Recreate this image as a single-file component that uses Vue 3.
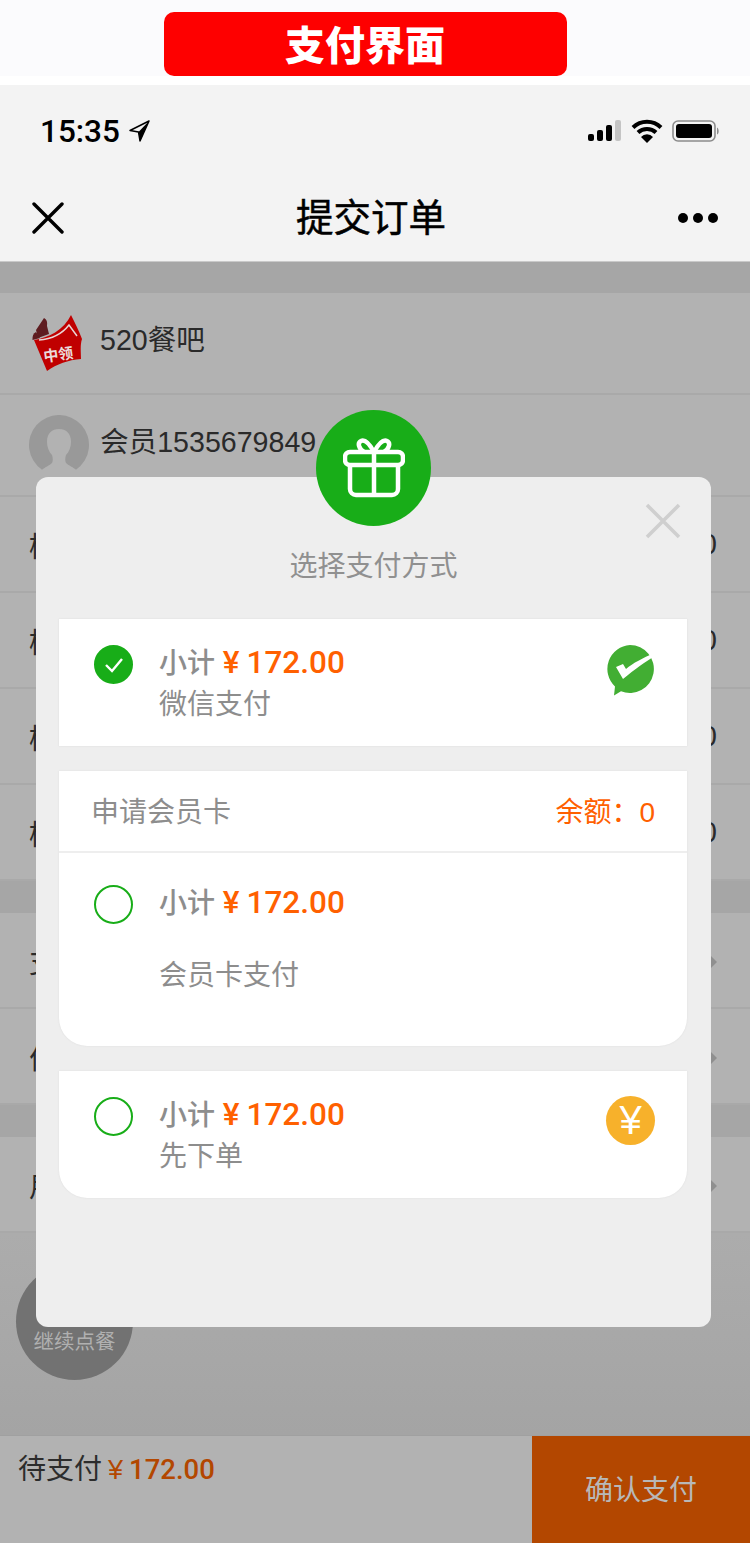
<script setup>
const items = [0, 1, 2, 3]
const links = [
  { label: '支付方式' },
  { label: '优惠券' }
]
</script>

<template>
  <div class="page">
    <div class="banner">
      <div class="banner-tag">支付界面</div>
    </div>

    <div class="phone">
      <div class="statusbar">
        <div class="clock">
          <span>15:35</span>
          <svg width="24" height="24" viewBox="0 0 24 24">
            <path d="M22 2 3 11.500l8.500 1.500 1.500 9z" fill="none" stroke="#000" stroke-width="1.500" stroke-linejoin="round" />
            <path d="M22 2 11.500 13l1.500 9z" fill="#000" />
          </svg>
        </div>
        <div class="status-icons">
          <svg width="35" height="24" viewBox="0 0 35 24">
            <rect x="1" y="15" width="6" height="7" rx="2" fill="#000" />
            <rect x="10" y="11" width="6" height="11" rx="2" fill="#000" />
            <rect x="19" y="6" width="6" height="16" rx="2" fill="#000" />
            <rect x="28" y="1" width="6" height="21" rx="2" fill="#c4c4c4" />
          </svg>
          <svg width="32" height="24" viewBox="0 0 32 24">
            <path d="M2 8.500a20 20 0 0 1 28 0M7 13.500a13 13 0 0 1 18 0" fill="none" stroke="#000" stroke-width="4" />
            <path d="M16 24l-6-6a8 8 0 0 1 12 0z" fill="#000" />
          </svg>
          <svg width="48" height="24" viewBox="0 0 48 24">
            <rect x="1" y="2" width="42" height="20" rx="5" fill="none" stroke="#8c8c8c" stroke-width="1.600" />
            <rect x="4" y="5" width="36" height="14" rx="3" fill="#000" />
            <path d="M45 8.500c2 .5 2.500 6.500 0 7z" fill="#8c8c8c" />
          </svg>
        </div>
      </div>
      <div class="navbar">
        <svg class="nav-close" width="32" height="32" viewBox="0 0 32 32">
          <path d="M2 2 30 30M30 2 2 30" stroke="#000" stroke-width="3.400" stroke-linecap="round" />
        </svg>
        <div class="nav-title">提交订单</div>
        <div class="nav-more"><i></i><i></i><i></i></div>
      </div>
    </div>

    <div class="order">
      <div class="group first">
        <div class="row head">
          <svg width="52" height="58" viewBox="0 0 52 58" class="logo">
            <path d="M4 16 12 4q4 2 3 8l2 8-11 4z" fill="#5e1c20" />
            <path d="M.5 26Q0 20 4 18l4 6z" fill="#5e1c20" />
            <path d="M2 26C16 24 32 16 39 1c4 8 8 16 11 24-2 6-1 13-1 20-13 1-24 5-34 12z" fill="#c00000" />
            <path d="M7 26C20 25 30 20 37 11l8 11" fill="none" stroke="#e9d5d5" stroke-width="1.500" />
            <text x="27" y="46" text-anchor="middle" class="logo-text" transform="rotate(-8 27 46)">中领</text>
          </svg>
          <span class="row-text">520餐吧</span>
        </div>
        <div class="row head">
          <svg width="60" height="60" viewBox="0 0 60 60" class="avatar">
            <path d="M13 54.700A30 30 0 1 1 47 54.700C45 53 39 50 37 48 36 46 36 43 37 40 40 37 42 32 42 27 42 18 37 14 30 14 23 14 18 18 18 27 18 32 20 37 23 40 24 43 24 46 23 48 21 50 15 53 13 54.700z" fill="#999" />
          </svg>
          <span class="row-text">会员1535679849</span>
        </div>
        <div v-for="i in items" :key="i" class="row item">
          <span class="row-text">桃</span>
          <span class="row-text">0</span>
        </div>
      </div>

      <div class="group">
        <div v-for="link in links" :key="link.label" class="row item">
          <span class="row-text">{{ link.label }}</span>
          <span class="arrow"></span>
        </div>
      </div>

      <div class="group">
        <div class="row item">
          <span class="row-text">用户备注</span>
          <span class="arrow"></span>
        </div>
      </div>

      <div class="filler">
        <div class="continue">继续点餐</div>
      </div>

      <div class="footer">
        <div class="footer-total">
          <span>待支付</span>
          <span class="footer-price"><small>¥</small>172.00</span>
        </div>
        <div class="footer-btn">确认支付</div>
      </div>
    </div>

    <div class="modal">
      <div class="gift">
        <svg width="62" height="60" viewBox="0 0 62 60">
          <path d="M31 14C26 5 22 1 18 3c-4 2-2 8 3 11M31 14c5-9 9-13 13-11 4 2 2 8-3 11" fill="none" stroke="#fff" stroke-width="4.500" />
          <rect x="2" y="14" width="58" height="13" rx="5" fill="none" stroke="#fff" stroke-width="4.500" />
          <path d="M7 27v24a6 6 0 0 0 6 6h36a6 6 0 0 0 6-6V27M31 14v43" fill="none" stroke="#fff" stroke-width="4.500" />
        </svg>
      </div>
      <svg class="modal-close" width="36" height="36" viewBox="0 0 36 36">
        <path d="M2 2 34 34M34 2 2 34" stroke="#cfcfcf" stroke-width="3.500" />
      </svg>
      <div class="modal-title">选择支付方式</div>

      <div class="pay-card square">
        <div class="pay-row">
          <span class="radio checked">
            <svg width="22" height="18" viewBox="0 0 22 18">
              <path d="M3 9l6 6L19 3" fill="none" stroke="#fff" stroke-width="2.400" />
            </svg>
          </span>
          <div class="pay-text">
            <div class="pay-sum">小计 <b><i>¥</i>172.00</b></div>
            <div class="pay-name">微信支付</div>
          </div>
          <svg class="pay-icon" width="50" height="52" viewBox="0 0 50 52">
            <path d="M25 1a24 24 0 1 1-9 46.300L9 51.500l1-9A24 24 0 0 1 25 1z" fill="#42ae33" />
            <path d="M11 23l7-3 3 5C28 19 38 14 49 9L50 12C40 18 30 25 18 35z" fill="#fff" />
          </svg>
        </div>
      </div>

      <div class="pay-card">
        <div class="card-head">
          <span>申请会员卡</span>
          <span class="balance">余额：0</span>
        </div>
        <div class="pay-row member">
          <span class="radio"></span>
          <div class="pay-text">
            <div class="pay-sum">小计 <b><i>¥</i>172.00</b></div>
            <div class="pay-name spaced">会员卡支付</div>
          </div>
        </div>
      </div>

      <div class="pay-card">
        <div class="pay-row">
          <span class="radio"></span>
          <div class="pay-text">
            <div class="pay-sum">小计 <b><i>¥</i>172.00</b></div>
            <div class="pay-name">先下单</div>
          </div>
          <span class="yen">¥</span>
        </div>
      </div>
    </div>
  </div>
</template>

<style>
body {
  background: #fff;
}
</style>

<style scoped>
.page {
  position: relative;
  width: 750px;
  height: 1545px;
  overflow: hidden;
  background: #fff;
  font-family: "Liberation Sans", "Noto Sans CJK SC", sans-serif;
}

.banner {
  height: 76px;
  background: #fbfbfd;
  display: flex;
  justify-content: center;
  align-items: flex-end;
  margin-bottom: 9px;
}
.banner-tag {
  width: 403px;
  height: 64px;
  margin-left: -20px;
  background: #fe0000;
  border-radius: 10px;
  color: #fff;
  font-size: 40px;
  font-weight: 900;
  line-height: 68px;
  text-align: center;
}

.phone {
  height: 176px;
  background: #f3f3f3;
}
.statusbar {
  height: 92px;
  padding: 0 30px 0 40px;
  display: flex;
  justify-content: space-between;
  align-items: center;
  box-sizing: border-box;
}
.clock {
  display: flex;
  align-items: center;
  gap: 7px;
  font-family: Roboto, sans-serif;
  font-size: 31.500px;
  font-weight: 500;
  color: #000;
}
.status-icons {
  display: flex;
  align-items: center;
  gap: 9px;
}
.navbar {
  height: 84px;
  display: flex;
  align-items: center;
  justify-content: space-between;
  padding: 0 32px 2px;
  box-sizing: border-box;
}
.nav-title {
  flex: 1;
  text-align: center;
  font-size: 37.500px;
  font-weight: 400;
  color: #000;
  -webkit-text-stroke: 0.5px #000;
  margin-top: -8px;
}
.nav-more {
  display: flex;
  gap: 5px;
}
.nav-more i {
  width: 10px;
  height: 10px;
  border-radius: 50%;
  background: #000;
}

.order {
  height: 1282px;
  background: #a6a6a6;
  display: flex;
  flex-direction: column;
  border-top: 1px solid #c9c9c9;
  box-sizing: border-box;
}
.group {
  margin-top: 32px;
  background: #b2b2b2;
}
.group.first {
  margin-top: 31px;
}
.row {
  display: flex;
  align-items: center;
  border-bottom: 2px solid #a9a9a9;
  box-sizing: border-box;
  color: #2a2a2a;
}
.row.head {
  height: 102px;
  gap: 11px;
  padding: 0 30px;
}
.row.head .row-text {
  margin-top: -12px;
}
.row.item {
  height: 96px;
  justify-content: space-between;
  padding: 0 33px 0 29px;
}
.row.head .logo {
  margin-left: 2px;
  margin-right: 5px;
}
.row.head .avatar {
  margin-left: -1px;
}
.logo-text {
  fill: #eadada;
  font-size: 15px;
  font-weight: 700;
}
.row-text {
  font-size: 28.600px;
}
.arrow {
  width: 0;
  height: 0;
  margin-top: 4px;
  border-left: 7px solid #8f8f8f;
  border-top: 7px solid transparent;
  border-bottom: 7px solid transparent;
}

.filler {
  flex: 1;
  position: relative;
  background: linear-gradient(#acacac, #a4a4a4);
}
.continue {
  position: absolute;
  left: 16px;
  top: 30px;
  width: 117px;
  height: 117px;
  border-radius: 50%;
  background: #727272;
  color: #b0b0b0;
  font-size: 20.500px;
  display: flex;
  align-items: flex-end;
  justify-content: center;
  padding-bottom: 25px;
  box-sizing: border-box;
}
.footer {
  height: 108px;
  background: #b2b2b2;
  display: flex;
  border-top: 1px solid #a0a0a0;
  box-sizing: border-box;
}
.footer-total {
  flex: 1;
  padding: 11px 0 0 18px;
  font-size: 28px;
  color: #2c2c2c;
  display: flex;
  gap: 6px;
  align-items: baseline;
}
.footer-price {
  color: #b34700;
  font-family: Roboto, sans-serif;
  font-size: 27.500px;
  font-weight: 500;
}
.footer-price small {
  font-family: "Liberation Sans", sans-serif;
  font-size: 27px;
  font-weight: 400;
  margin-right: 6px;
}
.footer-btn {
  width: 218px;
  background: #b34700;
  color: #b8b8b8;
  font-size: 28px;
  text-align: center;
  line-height: 110px;
}

.modal {
  position: absolute;
  left: 36px;
  top: 477px;
  width: 675px;
  height: 850px;
  background: #eee;
  border-radius: 12px;
  padding: 142px 24px 0 23px;
  box-sizing: border-box;
  display: flex;
  flex-direction: column;
  gap: 25px;
}
.gift {
  position: absolute;
  left: 280px;
  top: -67px;
  width: 115px;
  height: 116px;
  border-radius: 50%;
  background: #18ad18;
  display: flex;
  align-items: center;
  justify-content: center;
}
.modal-close {
  position: absolute;
  right: 30px;
  top: 26px;
}
.modal-title {
  position: absolute;
  left: 0;
  right: 0;
  top: 67px;
  text-align: center;
  font-size: 28px;
  color: #909090;
}
.pay-card {
  background: #fff;
  border-radius: 0 0 28px 28px;
  box-shadow: 0 0 2px #dcdcdc;
}
.pay-card.square {
  border-radius: 0;
}
.pay-row {
  min-height: 127px;
  padding: 23px 32px 0 35px;
  display: flex;
  align-items: flex-start;
  box-sizing: border-box;
}
.pay-row.member {
  height: 193px;
  padding-top: 29px;
}
.radio {
  width: 39px;
  height: 39px;
  margin-top: 3px;
  border: 2px solid #18ad18;
  border-radius: 50%;
  box-sizing: border-box;
  display: flex;
  align-items: center;
  justify-content: center;
}
.radio.checked {
  background: #18ad18;
}
.pay-text {
  flex: 1;
  margin: 1px 0 0 26px;
}
.pay-sum {
  font-size: 28px;
  line-height: 40px;
  color: #8d8d8d;
  font-weight: 500;
}
.pay-sum b {
  color: #ff6000;
  font-family: Roboto, sans-serif;
  font-size: 31.500px;
  font-weight: 500;
}
.pay-sum i {
  font-style: normal;
  margin-right: 7px;
}
.pay-name {
  font-size: 28px;
  line-height: 40px;
  color: #8d8d8d;
  margin-top: 1px;
}
.pay-name.spaced {
  margin-top: 32px;
}
.card-head {
  height: 82px;
  padding: 0 32px 2px;
  display: flex;
  justify-content: space-between;
  align-items: center;
  font-size: 28px;
  color: #8d8d8d;
  border-bottom: 2px solid #eee;
  box-sizing: border-box;
}
.balance {
  color: #ff6000;
}
.pay-icon {
  margin-top: 2px;
}
.yen {
  width: 49px;
  height: 49px;
  margin-top: 2px;
  border-radius: 50%;
  background: #f7b12b;
  color: #fff;
  font-size: 40px;
  line-height: 49px;
  text-align: center;
}
</style>
